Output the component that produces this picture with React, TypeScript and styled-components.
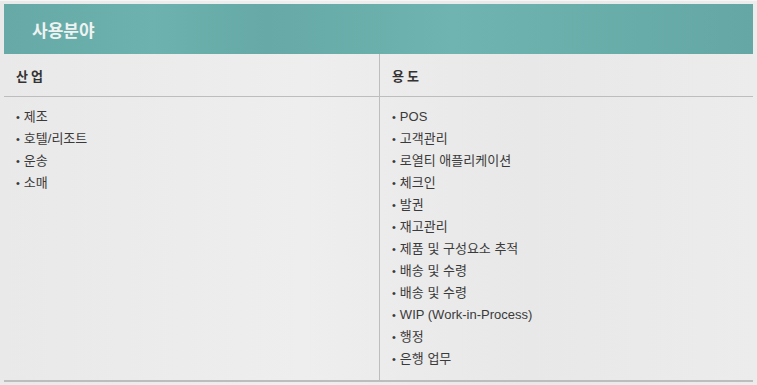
import styled, { createGlobalStyle } from "styled-components";

const industries = ["제조", "호텔/리조트", "운송", "소매"];

const uses = [
  "POS",
  "고객관리",
  "로열티 애플리케이션",
  "체크인",
  "발권",
  "재고관리",
  "제품 및 구성요소 추적",
  "배송 및 수령",
  "배송 및 수령",
  "WIP (Work-in-Process)",
  "행정",
  "은행 업무",
];

function App() {
  return (
    <>
      <GlobalStyle />
      <Page>
        <Panel>
          <PanelTitle>사용분야</PanelTitle>
          <Table>
            <HeadCell>산 업</HeadCell>
            <HeadCell divided>용 도</HeadCell>
            <BodyCell>
              <List>
                {industries.map((item) => (
                  <Item key={item}>{item}</Item>
                ))}
              </List>
            </BodyCell>
            <BodyCell divided>
              <List>
                {uses.map((item, index) => (
                  <Item key={item + index}>{item}</Item>
                ))}
              </List>
            </BodyCell>
          </Table>
        </Panel>
      </Page>
    </>
  );
}

const GlobalStyle = createGlobalStyle`
  html, body {
    margin: 0;
    padding: 0;
    background: #ebebeb;
  }

  body {
    font-family: "Liberation Sans", "Noto Sans CJK KR", sans-serif;
    color: #333;
  }
`;

const Page = styled.div`
  width: 757px;
  height: 385px;
  padding: 3px 4px 0 4px;
  box-sizing: border-box;
  background: linear-gradient(90deg, #e9e9e9 0%, #eeeeee 40%, #e8e8e8 70%, #ececec 100%);
  border-top: 1px solid #f6f6f6;
`;

const Panel = styled.div`
  width: 749px;
`;

const PanelTitle = styled.div`
  height: 50px;
  padding-left: 28px;
  display: flex;
  align-items: center;
  background: linear-gradient(
    90deg,
    #66a9a6 0%,
    #6db2ae 20%,
    #66a9a6 35%,
    #6fb4b0 60%,
    #64a7a4 100%
  );
  color: #eef3f2;
  font-size: 17px;
  font-weight: bold;
  font-family: "Noto Sans CJK KR", sans-serif;
`;

const Table = styled.div`
  display: grid;
  grid-template-columns: 375px 1fr;
  border-bottom: 2px solid #bdbdbd;
`;

const HeadCell = styled.div<{ divided?: boolean }>`
  height: 42px;
  padding-left: 12px;
  display: flex;
  align-items: center;
  border-bottom: 1px solid #bdbdbd;
  border-left: ${(p) => (p.divided ? "1px solid #bdbdbd" : "none")};
  font-size: 13px;
  font-weight: bold;
  color: #333;
  font-family: "Noto Sans CJK KR", sans-serif;
`;

const BodyCell = styled.div<{ divided?: boolean }>`
  padding: 9px 12px 10px 12px;
  border-left: ${(p) => (p.divided ? "1px solid #bdbdbd" : "none")};
`;

const List = styled.ul`
  list-style: none;
  margin: 0;
  padding: 0;
`;

const Item = styled.li`
  font-size: 13px;
  line-height: 22px;
  color: #3a3a3a;

  &::before {
    content: "•";
    margin-right: 4px;
    font-size: 11px;
  }
`;

export default App;
